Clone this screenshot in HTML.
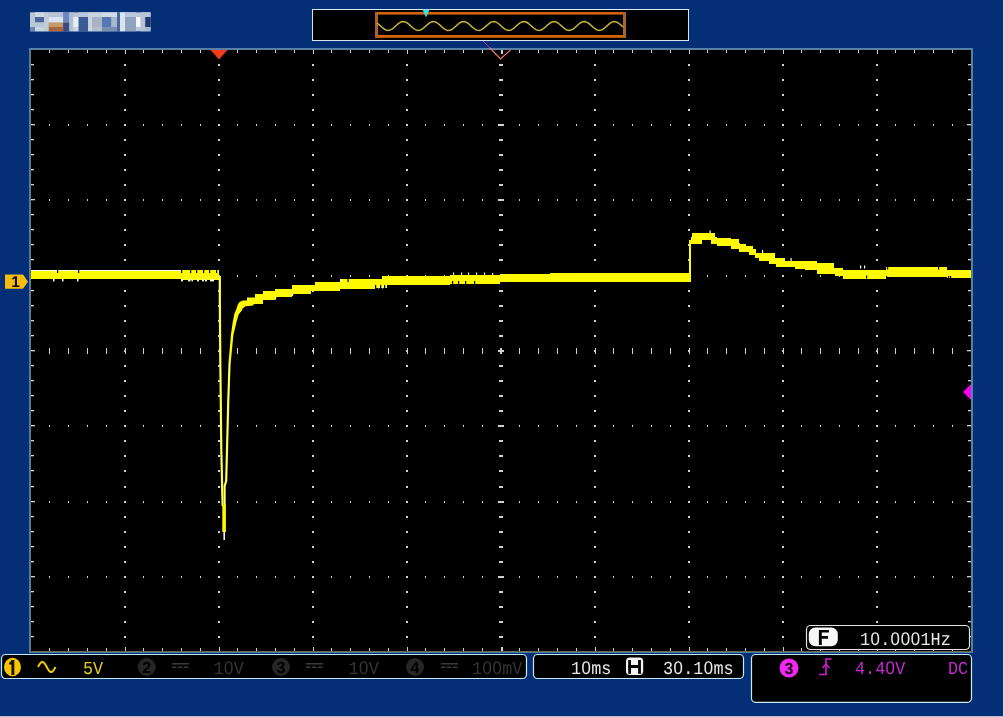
<!DOCTYPE html>
<html><head><meta charset="utf-8"><style>
html,body{margin:0;padding:0;}
svg text{text-rendering:geometricPrecision;}
svg{will-change:transform;}
body{width:1004px;height:717px;position:relative;overflow:hidden;background:#042f76;font-family:"Liberation Mono",monospace;}
.t{position:absolute;white-space:pre;line-height:1;}
.box{position:absolute;box-sizing:border-box;background:#000;}
</style></head><body>
<svg width="1004" height="717" viewBox="0 0 1004 717" style="position:absolute;left:0;top:0"><rect x="0" y="0" width="1004" height="717" fill="#042f76"/><rect x="1003" y="0" width="1" height="717" fill="#d8dce6"/><rect x="0" y="716" width="1004" height="1" fill="#b8c0d4"/><defs><filter id="lb" x="-5%" y="-20%" width="110%" height="140%"><feGaussianBlur stdDeviation="0.55"/></filter></defs><g filter="url(#lb)"><rect x="30" y="12.3" width="120.5" height="19" fill="#b8c6da"/><rect x="30" y="27" width="5" height="4.3" fill="#7088ae"/><rect x="35" y="12.3" width="9" height="4.7" fill="#d0d8e4"/><rect x="35" y="17" width="9" height="5.5" fill="#4c6898"/><rect x="35" y="22.5" width="9" height="4.5" fill="#b8c8d8"/><rect x="35" y="27" width="9" height="4.3" fill="#c8d4e4"/><rect x="44" y="12.3" width="4.7" height="19" fill="#c0ccd8"/><rect x="48.7" y="12.3" width="14.4" height="4.7" fill="#b8c4d4"/><rect x="48.7" y="17" width="14.4" height="5.5" fill="#d8e4ee"/><rect x="48.7" y="22.5" width="14.4" height="4.5" fill="#c49a6a"/><rect x="48.7" y="27" width="14.4" height="4.3" fill="#a8683a"/><rect x="63.1" y="12.3" width="6.3" height="10.2" fill="#6c88c0"/><rect x="63.1" y="22.5" width="6.3" height="8.8" fill="#3e4c80"/><rect x="69.4" y="12.3" width="3.9" height="19" fill="#b0c0d4"/><rect x="73.3" y="17" width="5.3" height="10" fill="#e8eef6"/><rect x="73.3" y="27" width="5.3" height="4.3" fill="#c8d4e4"/><rect x="78.6" y="12.3" width="9.5" height="4.7" fill="#b8c8dc"/><rect x="78.6" y="17" width="9.5" height="14.3" fill="#3c5a94"/><rect x="88.1" y="12.3" width="3.9" height="19" fill="#c8d4e4"/><rect x="92" y="12.3" width="10" height="4.7" fill="#c8d4e0"/><rect x="92" y="17" width="10" height="10" fill="#a8b4c4"/><rect x="92" y="27" width="10" height="4.3" fill="#b0bcd0"/><rect x="102" y="12.3" width="15" height="4.7" fill="#d0dce8"/><rect x="102" y="17" width="9.5" height="10" fill="#5a78b0"/><rect x="111.5" y="17" width="5.5" height="10" fill="#a8b8cc"/><rect x="102" y="27" width="15" height="4.3" fill="#7890b0"/><rect x="117" y="12.3" width="3" height="19" fill="#4868a0"/><rect x="120" y="12.3" width="5" height="19" fill="#d8e4f0"/><rect x="125" y="12.3" width="11" height="19" fill="#90a4c0"/><rect x="125" y="12.3" width="11" height="4.7" fill="#b8c8dc"/><rect x="136" y="17" width="4.6" height="10" fill="#f4f8fc"/><rect x="140.6" y="12.3" width="4.6" height="19" fill="#b8c4d4"/><rect x="145.2" y="12.3" width="5.3" height="4.7" fill="#b8c8dc"/><rect x="145.2" y="17" width="5.3" height="10" fill="#20386c"/><rect x="145.2" y="27" width="5.3" height="4.3" fill="#a8b8cc"/></g><rect x="312" y="9" width="377" height="32" fill="#d4eaf0"/><rect x="313" y="10" width="375" height="30" fill="#000"/><rect x="375" y="12" width="251" height="2.6" fill="#d4640c"/><rect x="375" y="35" width="251" height="2.8" fill="#d4640c"/><rect x="375" y="12" width="3" height="25.8" fill="#b0602a"/><rect x="623" y="12" width="3" height="25.8" fill="#a8642e"/><polyline points="377.0,23.02 378.0,23.75 379.0,24.58 380.0,25.48 381.0,26.39 382.0,27.29 383.0,28.13 384.0,28.88 385.0,29.51 386.0,29.98 387.0,30.28 388.0,30.40 389.0,30.33 390.0,30.07 391.0,29.63 392.0,29.04 393.0,28.31 394.0,27.49 395.0,26.60 396.0,25.69 397.0,24.79 398.0,23.94 399.0,23.18 400.0,22.54 401.0,22.05 402.0,21.74 403.0,21.60 404.0,21.66 405.0,21.91 406.0,22.33 407.0,22.91 408.0,23.62 409.0,24.44 410.0,25.32 411.0,26.24 412.0,27.14 413.0,27.99 414.0,28.76 415.0,29.41 416.0,29.91 417.0,30.24 418.0,30.39 419.0,30.35 420.0,30.12 421.0,29.72 422.0,29.15 423.0,28.44 424.0,27.63 425.0,26.75 426.0,25.84 427.0,24.94 428.0,24.08 429.0,23.30 430.0,22.64 431.0,22.13 432.0,21.78 433.0,21.61 434.0,21.64 435.0,21.85 436.0,22.24 437.0,22.80 438.0,23.49 439.0,24.29 440.0,25.17 441.0,26.08 442.0,26.99 443.0,27.85 444.0,28.64 445.0,29.31 446.0,29.84 447.0,30.20 448.0,30.38 449.0,30.37 450.0,30.17 451.0,29.80 452.0,29.25 453.0,28.57 454.0,27.78 455.0,26.91 456.0,26.00 457.0,25.09 458.0,24.22 459.0,23.42 460.0,22.74 461.0,22.20 462.0,21.82 463.0,21.63 464.0,21.62 465.0,21.80 466.0,22.16 467.0,22.69 468.0,23.37 469.0,24.15 470.0,25.02 471.0,25.92 472.0,26.84 473.0,27.71 474.0,28.51 475.0,29.20 476.0,29.76 477.0,30.15 478.0,30.36 479.0,30.39 480.0,30.22 481.0,29.87 482.0,29.36 483.0,28.70 484.0,27.92 485.0,27.06 486.0,26.15 487.0,25.24 488.0,24.36 489.0,23.55 490.0,22.85 491.0,22.28 492.0,21.88 493.0,21.65 494.0,21.61 495.0,21.76 496.0,22.09 497.0,22.59 498.0,23.24 499.0,24.01 500.0,24.87 501.0,25.77 502.0,26.68 503.0,27.57 504.0,28.38 505.0,29.10 506.0,29.68 507.0,30.10 508.0,30.34 509.0,30.40 510.0,30.26 511.0,29.94 512.0,29.46 513.0,28.82 514.0,28.06 515.0,27.21 516.0,26.31 517.0,25.39 518.0,24.51 519.0,23.68 520.0,22.96 521.0,22.37 522.0,21.93 523.0,21.67 524.0,21.60 525.0,21.72 526.0,22.02 527.0,22.50 528.0,23.12 529.0,23.87 530.0,24.72 531.0,25.61 532.0,26.53 533.0,27.42 534.0,28.25 535.0,28.98 536.0,29.59 537.0,30.04 538.0,30.31 539.0,30.40 540.0,30.30 541.0,30.01 542.0,29.55 543.0,28.94 544.0,28.19 545.0,27.36 546.0,26.46 547.0,25.55 548.0,24.65 549.0,23.82 550.0,23.07 551.0,22.46 552.0,21.99 553.0,21.70 554.0,21.60 555.0,21.69 556.0,21.96 557.0,22.40 558.0,23.01 559.0,23.74 560.0,24.57 561.0,25.46 562.0,26.37 563.0,27.27 564.0,28.11 565.0,28.87 566.0,29.50 567.0,29.97 568.0,30.28 569.0,30.40 570.0,30.33 571.0,30.07 572.0,29.64 573.0,29.05 574.0,28.33 575.0,27.51 576.0,26.62 577.0,25.70 578.0,24.80 579.0,23.95 580.0,23.19 581.0,22.55 582.0,22.06 583.0,21.74 584.0,21.60 585.0,21.66 586.0,21.90 587.0,22.32 588.0,22.89 589.0,23.61 590.0,24.42 591.0,25.30 592.0,26.22 593.0,27.12 594.0,27.98 595.0,28.75 596.0,29.40 597.0,29.90 598.0,30.24 599.0,30.39 600.0,30.35 601.0,30.13 602.0,29.72 603.0,29.16 604.0,28.46 605.0,27.65 606.0,26.77 607.0,25.86 608.0,24.95 609.0,24.09 610.0,23.31 611.0,22.65 612.0,22.13 613.0,21.78 614.0,21.61 615.0,21.64 616.0,21.85 617.0,22.23 618.0,22.79 619.0,23.48 620.0,24.28 621.0,25.15 622.0,26.06 623.0,26.97" fill="none" stroke="#c8b43a" stroke-width="1.5"/><polygon points="422.5,9.5 429.5,9.5 426,17.5" fill="#38e0e0"/><rect x="29" y="48" width="944" height="2" fill="#5a80a8"/><rect x="29" y="48" width="1" height="605" fill="#3a7fd0"/><rect x="30" y="50" width="1" height="601" fill="#7a705a"/><rect x="971" y="48" width="2" height="605" fill="#4a88a8"/><rect x="30" y="651" width="943" height="1" fill="#6a6a50"/><rect x="29" y="652" width="944" height="1" fill="#4a80a0"/><rect x="31" y="50" width="940" height="601" fill="#000"/><g fill="#d0d0d0"><rect x="124" y="64" width="2" height="2"/><rect x="124" y="79" width="2" height="2"/><rect x="124" y="94" width="2" height="2"/><rect x="124" y="109" width="2" height="2"/><rect x="124" y="124" width="2" height="2"/><rect x="124" y="139" width="2" height="2"/><rect x="124" y="154" width="2" height="2"/><rect x="124" y="169" width="2" height="2"/><rect x="124" y="184" width="2" height="2"/><rect x="124" y="199" width="2" height="2"/><rect x="124" y="214" width="2" height="2"/><rect x="124" y="229" width="2" height="2"/><rect x="124" y="244" width="2" height="2"/><rect x="124" y="259" width="2" height="2"/><rect x="124" y="275" width="2" height="2"/><rect x="124" y="290" width="2" height="2"/><rect x="124" y="305" width="2" height="2"/><rect x="124" y="320" width="2" height="2"/><rect x="124" y="335" width="2" height="2"/><rect x="124" y="350" width="2" height="2"/><rect x="124" y="365" width="2" height="2"/><rect x="124" y="380" width="2" height="2"/><rect x="124" y="395" width="2" height="2"/><rect x="124" y="410" width="2" height="2"/><rect x="124" y="425" width="2" height="2"/><rect x="124" y="440" width="2" height="2"/><rect x="124" y="455" width="2" height="2"/><rect x="124" y="470" width="2" height="2"/><rect x="124" y="486" width="2" height="2"/><rect x="124" y="501" width="2" height="2"/><rect x="124" y="516" width="2" height="2"/><rect x="124" y="531" width="2" height="2"/><rect x="124" y="546" width="2" height="2"/><rect x="124" y="561" width="2" height="2"/><rect x="124" y="576" width="2" height="2"/><rect x="124" y="591" width="2" height="2"/><rect x="124" y="606" width="2" height="2"/><rect x="124" y="621" width="2" height="2"/><rect x="124" y="636" width="2" height="2"/><rect x="218" y="64" width="2" height="2"/><rect x="218" y="79" width="2" height="2"/><rect x="218" y="94" width="2" height="2"/><rect x="218" y="109" width="2" height="2"/><rect x="218" y="124" width="2" height="2"/><rect x="218" y="139" width="2" height="2"/><rect x="218" y="154" width="2" height="2"/><rect x="218" y="169" width="2" height="2"/><rect x="218" y="184" width="2" height="2"/><rect x="218" y="199" width="2" height="2"/><rect x="218" y="214" width="2" height="2"/><rect x="218" y="229" width="2" height="2"/><rect x="218" y="244" width="2" height="2"/><rect x="218" y="259" width="2" height="2"/><rect x="218" y="275" width="2" height="2"/><rect x="218" y="290" width="2" height="2"/><rect x="218" y="305" width="2" height="2"/><rect x="218" y="320" width="2" height="2"/><rect x="218" y="335" width="2" height="2"/><rect x="218" y="350" width="2" height="2"/><rect x="218" y="365" width="2" height="2"/><rect x="218" y="380" width="2" height="2"/><rect x="218" y="395" width="2" height="2"/><rect x="218" y="410" width="2" height="2"/><rect x="218" y="425" width="2" height="2"/><rect x="218" y="440" width="2" height="2"/><rect x="218" y="455" width="2" height="2"/><rect x="218" y="470" width="2" height="2"/><rect x="218" y="486" width="2" height="2"/><rect x="218" y="501" width="2" height="2"/><rect x="218" y="516" width="2" height="2"/><rect x="218" y="531" width="2" height="2"/><rect x="218" y="546" width="2" height="2"/><rect x="218" y="561" width="2" height="2"/><rect x="218" y="576" width="2" height="2"/><rect x="218" y="591" width="2" height="2"/><rect x="218" y="606" width="2" height="2"/><rect x="218" y="621" width="2" height="2"/><rect x="218" y="636" width="2" height="2"/><rect x="312" y="64" width="2" height="2"/><rect x="312" y="79" width="2" height="2"/><rect x="312" y="94" width="2" height="2"/><rect x="312" y="109" width="2" height="2"/><rect x="312" y="124" width="2" height="2"/><rect x="312" y="139" width="2" height="2"/><rect x="312" y="154" width="2" height="2"/><rect x="312" y="169" width="2" height="2"/><rect x="312" y="184" width="2" height="2"/><rect x="312" y="199" width="2" height="2"/><rect x="312" y="214" width="2" height="2"/><rect x="312" y="229" width="2" height="2"/><rect x="312" y="244" width="2" height="2"/><rect x="312" y="259" width="2" height="2"/><rect x="312" y="275" width="2" height="2"/><rect x="312" y="290" width="2" height="2"/><rect x="312" y="305" width="2" height="2"/><rect x="312" y="320" width="2" height="2"/><rect x="312" y="335" width="2" height="2"/><rect x="312" y="350" width="2" height="2"/><rect x="312" y="365" width="2" height="2"/><rect x="312" y="380" width="2" height="2"/><rect x="312" y="395" width="2" height="2"/><rect x="312" y="410" width="2" height="2"/><rect x="312" y="425" width="2" height="2"/><rect x="312" y="440" width="2" height="2"/><rect x="312" y="455" width="2" height="2"/><rect x="312" y="470" width="2" height="2"/><rect x="312" y="486" width="2" height="2"/><rect x="312" y="501" width="2" height="2"/><rect x="312" y="516" width="2" height="2"/><rect x="312" y="531" width="2" height="2"/><rect x="312" y="546" width="2" height="2"/><rect x="312" y="561" width="2" height="2"/><rect x="312" y="576" width="2" height="2"/><rect x="312" y="591" width="2" height="2"/><rect x="312" y="606" width="2" height="2"/><rect x="312" y="621" width="2" height="2"/><rect x="312" y="636" width="2" height="2"/><rect x="406" y="64" width="2" height="2"/><rect x="406" y="79" width="2" height="2"/><rect x="406" y="94" width="2" height="2"/><rect x="406" y="109" width="2" height="2"/><rect x="406" y="124" width="2" height="2"/><rect x="406" y="139" width="2" height="2"/><rect x="406" y="154" width="2" height="2"/><rect x="406" y="169" width="2" height="2"/><rect x="406" y="184" width="2" height="2"/><rect x="406" y="199" width="2" height="2"/><rect x="406" y="214" width="2" height="2"/><rect x="406" y="229" width="2" height="2"/><rect x="406" y="244" width="2" height="2"/><rect x="406" y="259" width="2" height="2"/><rect x="406" y="275" width="2" height="2"/><rect x="406" y="290" width="2" height="2"/><rect x="406" y="305" width="2" height="2"/><rect x="406" y="320" width="2" height="2"/><rect x="406" y="335" width="2" height="2"/><rect x="406" y="350" width="2" height="2"/><rect x="406" y="365" width="2" height="2"/><rect x="406" y="380" width="2" height="2"/><rect x="406" y="395" width="2" height="2"/><rect x="406" y="410" width="2" height="2"/><rect x="406" y="425" width="2" height="2"/><rect x="406" y="440" width="2" height="2"/><rect x="406" y="455" width="2" height="2"/><rect x="406" y="470" width="2" height="2"/><rect x="406" y="486" width="2" height="2"/><rect x="406" y="501" width="2" height="2"/><rect x="406" y="516" width="2" height="2"/><rect x="406" y="531" width="2" height="2"/><rect x="406" y="546" width="2" height="2"/><rect x="406" y="561" width="2" height="2"/><rect x="406" y="576" width="2" height="2"/><rect x="406" y="591" width="2" height="2"/><rect x="406" y="606" width="2" height="2"/><rect x="406" y="621" width="2" height="2"/><rect x="406" y="636" width="2" height="2"/><rect x="594" y="64" width="2" height="2"/><rect x="594" y="79" width="2" height="2"/><rect x="594" y="94" width="2" height="2"/><rect x="594" y="109" width="2" height="2"/><rect x="594" y="124" width="2" height="2"/><rect x="594" y="139" width="2" height="2"/><rect x="594" y="154" width="2" height="2"/><rect x="594" y="169" width="2" height="2"/><rect x="594" y="184" width="2" height="2"/><rect x="594" y="199" width="2" height="2"/><rect x="594" y="214" width="2" height="2"/><rect x="594" y="229" width="2" height="2"/><rect x="594" y="244" width="2" height="2"/><rect x="594" y="259" width="2" height="2"/><rect x="594" y="275" width="2" height="2"/><rect x="594" y="290" width="2" height="2"/><rect x="594" y="305" width="2" height="2"/><rect x="594" y="320" width="2" height="2"/><rect x="594" y="335" width="2" height="2"/><rect x="594" y="350" width="2" height="2"/><rect x="594" y="365" width="2" height="2"/><rect x="594" y="380" width="2" height="2"/><rect x="594" y="395" width="2" height="2"/><rect x="594" y="410" width="2" height="2"/><rect x="594" y="425" width="2" height="2"/><rect x="594" y="440" width="2" height="2"/><rect x="594" y="455" width="2" height="2"/><rect x="594" y="470" width="2" height="2"/><rect x="594" y="486" width="2" height="2"/><rect x="594" y="501" width="2" height="2"/><rect x="594" y="516" width="2" height="2"/><rect x="594" y="531" width="2" height="2"/><rect x="594" y="546" width="2" height="2"/><rect x="594" y="561" width="2" height="2"/><rect x="594" y="576" width="2" height="2"/><rect x="594" y="591" width="2" height="2"/><rect x="594" y="606" width="2" height="2"/><rect x="594" y="621" width="2" height="2"/><rect x="594" y="636" width="2" height="2"/><rect x="688" y="64" width="2" height="2"/><rect x="688" y="79" width="2" height="2"/><rect x="688" y="94" width="2" height="2"/><rect x="688" y="109" width="2" height="2"/><rect x="688" y="124" width="2" height="2"/><rect x="688" y="139" width="2" height="2"/><rect x="688" y="154" width="2" height="2"/><rect x="688" y="169" width="2" height="2"/><rect x="688" y="184" width="2" height="2"/><rect x="688" y="199" width="2" height="2"/><rect x="688" y="214" width="2" height="2"/><rect x="688" y="229" width="2" height="2"/><rect x="688" y="244" width="2" height="2"/><rect x="688" y="259" width="2" height="2"/><rect x="688" y="275" width="2" height="2"/><rect x="688" y="290" width="2" height="2"/><rect x="688" y="305" width="2" height="2"/><rect x="688" y="320" width="2" height="2"/><rect x="688" y="335" width="2" height="2"/><rect x="688" y="350" width="2" height="2"/><rect x="688" y="365" width="2" height="2"/><rect x="688" y="380" width="2" height="2"/><rect x="688" y="395" width="2" height="2"/><rect x="688" y="410" width="2" height="2"/><rect x="688" y="425" width="2" height="2"/><rect x="688" y="440" width="2" height="2"/><rect x="688" y="455" width="2" height="2"/><rect x="688" y="470" width="2" height="2"/><rect x="688" y="486" width="2" height="2"/><rect x="688" y="501" width="2" height="2"/><rect x="688" y="516" width="2" height="2"/><rect x="688" y="531" width="2" height="2"/><rect x="688" y="546" width="2" height="2"/><rect x="688" y="561" width="2" height="2"/><rect x="688" y="576" width="2" height="2"/><rect x="688" y="591" width="2" height="2"/><rect x="688" y="606" width="2" height="2"/><rect x="688" y="621" width="2" height="2"/><rect x="688" y="636" width="2" height="2"/><rect x="782" y="64" width="2" height="2"/><rect x="782" y="79" width="2" height="2"/><rect x="782" y="94" width="2" height="2"/><rect x="782" y="109" width="2" height="2"/><rect x="782" y="124" width="2" height="2"/><rect x="782" y="139" width="2" height="2"/><rect x="782" y="154" width="2" height="2"/><rect x="782" y="169" width="2" height="2"/><rect x="782" y="184" width="2" height="2"/><rect x="782" y="199" width="2" height="2"/><rect x="782" y="214" width="2" height="2"/><rect x="782" y="229" width="2" height="2"/><rect x="782" y="244" width="2" height="2"/><rect x="782" y="259" width="2" height="2"/><rect x="782" y="275" width="2" height="2"/><rect x="782" y="290" width="2" height="2"/><rect x="782" y="305" width="2" height="2"/><rect x="782" y="320" width="2" height="2"/><rect x="782" y="335" width="2" height="2"/><rect x="782" y="350" width="2" height="2"/><rect x="782" y="365" width="2" height="2"/><rect x="782" y="380" width="2" height="2"/><rect x="782" y="395" width="2" height="2"/><rect x="782" y="410" width="2" height="2"/><rect x="782" y="425" width="2" height="2"/><rect x="782" y="440" width="2" height="2"/><rect x="782" y="455" width="2" height="2"/><rect x="782" y="470" width="2" height="2"/><rect x="782" y="486" width="2" height="2"/><rect x="782" y="501" width="2" height="2"/><rect x="782" y="516" width="2" height="2"/><rect x="782" y="531" width="2" height="2"/><rect x="782" y="546" width="2" height="2"/><rect x="782" y="561" width="2" height="2"/><rect x="782" y="576" width="2" height="2"/><rect x="782" y="591" width="2" height="2"/><rect x="782" y="606" width="2" height="2"/><rect x="782" y="621" width="2" height="2"/><rect x="782" y="636" width="2" height="2"/><rect x="876" y="64" width="2" height="2"/><rect x="876" y="79" width="2" height="2"/><rect x="876" y="94" width="2" height="2"/><rect x="876" y="109" width="2" height="2"/><rect x="876" y="124" width="2" height="2"/><rect x="876" y="139" width="2" height="2"/><rect x="876" y="154" width="2" height="2"/><rect x="876" y="169" width="2" height="2"/><rect x="876" y="184" width="2" height="2"/><rect x="876" y="199" width="2" height="2"/><rect x="876" y="214" width="2" height="2"/><rect x="876" y="229" width="2" height="2"/><rect x="876" y="244" width="2" height="2"/><rect x="876" y="259" width="2" height="2"/><rect x="876" y="275" width="2" height="2"/><rect x="876" y="290" width="2" height="2"/><rect x="876" y="305" width="2" height="2"/><rect x="876" y="320" width="2" height="2"/><rect x="876" y="335" width="2" height="2"/><rect x="876" y="350" width="2" height="2"/><rect x="876" y="365" width="2" height="2"/><rect x="876" y="380" width="2" height="2"/><rect x="876" y="395" width="2" height="2"/><rect x="876" y="410" width="2" height="2"/><rect x="876" y="425" width="2" height="2"/><rect x="876" y="440" width="2" height="2"/><rect x="876" y="455" width="2" height="2"/><rect x="876" y="470" width="2" height="2"/><rect x="876" y="486" width="2" height="2"/><rect x="876" y="501" width="2" height="2"/><rect x="876" y="516" width="2" height="2"/><rect x="876" y="531" width="2" height="2"/><rect x="876" y="546" width="2" height="2"/><rect x="876" y="561" width="2" height="2"/><rect x="876" y="576" width="2" height="2"/><rect x="876" y="591" width="2" height="2"/><rect x="876" y="606" width="2" height="2"/><rect x="876" y="621" width="2" height="2"/><rect x="876" y="636" width="2" height="2"/><rect x="49" y="124" width="1" height="2"/><rect x="68" y="124" width="1" height="2"/><rect x="87" y="124" width="1" height="2"/><rect x="106" y="124" width="1" height="2"/><rect x="143" y="124" width="1" height="2"/><rect x="162" y="124" width="1" height="2"/><rect x="181" y="124" width="1" height="2"/><rect x="200" y="124" width="1" height="2"/><rect x="237" y="124" width="1" height="2"/><rect x="256" y="124" width="1" height="2"/><rect x="275" y="124" width="1" height="2"/><rect x="294" y="124" width="1" height="2"/><rect x="331" y="124" width="1" height="2"/><rect x="350" y="124" width="1" height="2"/><rect x="369" y="124" width="1" height="2"/><rect x="388" y="124" width="1" height="2"/><rect x="425" y="124" width="1" height="2"/><rect x="444" y="124" width="1" height="2"/><rect x="463" y="124" width="1" height="2"/><rect x="482" y="124" width="1" height="2"/><rect x="519" y="124" width="1" height="2"/><rect x="538" y="124" width="1" height="2"/><rect x="557" y="124" width="1" height="2"/><rect x="576" y="124" width="1" height="2"/><rect x="613" y="124" width="1" height="2"/><rect x="632" y="124" width="1" height="2"/><rect x="651" y="124" width="1" height="2"/><rect x="670" y="124" width="1" height="2"/><rect x="707" y="124" width="1" height="2"/><rect x="726" y="124" width="1" height="2"/><rect x="745" y="124" width="1" height="2"/><rect x="764" y="124" width="1" height="2"/><rect x="801" y="124" width="1" height="2"/><rect x="820" y="124" width="1" height="2"/><rect x="839" y="124" width="1" height="2"/><rect x="858" y="124" width="1" height="2"/><rect x="895" y="124" width="1" height="2"/><rect x="914" y="124" width="1" height="2"/><rect x="933" y="124" width="1" height="2"/><rect x="952" y="124" width="1" height="2"/><rect x="49" y="199" width="1" height="2"/><rect x="68" y="199" width="1" height="2"/><rect x="87" y="199" width="1" height="2"/><rect x="106" y="199" width="1" height="2"/><rect x="143" y="199" width="1" height="2"/><rect x="162" y="199" width="1" height="2"/><rect x="181" y="199" width="1" height="2"/><rect x="200" y="199" width="1" height="2"/><rect x="237" y="199" width="1" height="2"/><rect x="256" y="199" width="1" height="2"/><rect x="275" y="199" width="1" height="2"/><rect x="294" y="199" width="1" height="2"/><rect x="331" y="199" width="1" height="2"/><rect x="350" y="199" width="1" height="2"/><rect x="369" y="199" width="1" height="2"/><rect x="388" y="199" width="1" height="2"/><rect x="425" y="199" width="1" height="2"/><rect x="444" y="199" width="1" height="2"/><rect x="463" y="199" width="1" height="2"/><rect x="482" y="199" width="1" height="2"/><rect x="519" y="199" width="1" height="2"/><rect x="538" y="199" width="1" height="2"/><rect x="557" y="199" width="1" height="2"/><rect x="576" y="199" width="1" height="2"/><rect x="613" y="199" width="1" height="2"/><rect x="632" y="199" width="1" height="2"/><rect x="651" y="199" width="1" height="2"/><rect x="670" y="199" width="1" height="2"/><rect x="707" y="199" width="1" height="2"/><rect x="726" y="199" width="1" height="2"/><rect x="745" y="199" width="1" height="2"/><rect x="764" y="199" width="1" height="2"/><rect x="801" y="199" width="1" height="2"/><rect x="820" y="199" width="1" height="2"/><rect x="839" y="199" width="1" height="2"/><rect x="858" y="199" width="1" height="2"/><rect x="895" y="199" width="1" height="2"/><rect x="914" y="199" width="1" height="2"/><rect x="933" y="199" width="1" height="2"/><rect x="952" y="199" width="1" height="2"/><rect x="49" y="275" width="1" height="2"/><rect x="68" y="275" width="1" height="2"/><rect x="87" y="275" width="1" height="2"/><rect x="106" y="275" width="1" height="2"/><rect x="143" y="275" width="1" height="2"/><rect x="162" y="275" width="1" height="2"/><rect x="181" y="275" width="1" height="2"/><rect x="200" y="275" width="1" height="2"/><rect x="237" y="275" width="1" height="2"/><rect x="256" y="275" width="1" height="2"/><rect x="275" y="275" width="1" height="2"/><rect x="294" y="275" width="1" height="2"/><rect x="331" y="275" width="1" height="2"/><rect x="350" y="275" width="1" height="2"/><rect x="369" y="275" width="1" height="2"/><rect x="388" y="275" width="1" height="2"/><rect x="425" y="275" width="1" height="2"/><rect x="444" y="275" width="1" height="2"/><rect x="463" y="275" width="1" height="2"/><rect x="482" y="275" width="1" height="2"/><rect x="519" y="275" width="1" height="2"/><rect x="538" y="275" width="1" height="2"/><rect x="557" y="275" width="1" height="2"/><rect x="576" y="275" width="1" height="2"/><rect x="613" y="275" width="1" height="2"/><rect x="632" y="275" width="1" height="2"/><rect x="651" y="275" width="1" height="2"/><rect x="670" y="275" width="1" height="2"/><rect x="707" y="275" width="1" height="2"/><rect x="726" y="275" width="1" height="2"/><rect x="745" y="275" width="1" height="2"/><rect x="764" y="275" width="1" height="2"/><rect x="801" y="275" width="1" height="2"/><rect x="820" y="275" width="1" height="2"/><rect x="839" y="275" width="1" height="2"/><rect x="858" y="275" width="1" height="2"/><rect x="895" y="275" width="1" height="2"/><rect x="914" y="275" width="1" height="2"/><rect x="933" y="275" width="1" height="2"/><rect x="952" y="275" width="1" height="2"/><rect x="49" y="425" width="1" height="2"/><rect x="68" y="425" width="1" height="2"/><rect x="87" y="425" width="1" height="2"/><rect x="106" y="425" width="1" height="2"/><rect x="143" y="425" width="1" height="2"/><rect x="162" y="425" width="1" height="2"/><rect x="181" y="425" width="1" height="2"/><rect x="200" y="425" width="1" height="2"/><rect x="237" y="425" width="1" height="2"/><rect x="256" y="425" width="1" height="2"/><rect x="275" y="425" width="1" height="2"/><rect x="294" y="425" width="1" height="2"/><rect x="331" y="425" width="1" height="2"/><rect x="350" y="425" width="1" height="2"/><rect x="369" y="425" width="1" height="2"/><rect x="388" y="425" width="1" height="2"/><rect x="425" y="425" width="1" height="2"/><rect x="444" y="425" width="1" height="2"/><rect x="463" y="425" width="1" height="2"/><rect x="482" y="425" width="1" height="2"/><rect x="519" y="425" width="1" height="2"/><rect x="538" y="425" width="1" height="2"/><rect x="557" y="425" width="1" height="2"/><rect x="576" y="425" width="1" height="2"/><rect x="613" y="425" width="1" height="2"/><rect x="632" y="425" width="1" height="2"/><rect x="651" y="425" width="1" height="2"/><rect x="670" y="425" width="1" height="2"/><rect x="707" y="425" width="1" height="2"/><rect x="726" y="425" width="1" height="2"/><rect x="745" y="425" width="1" height="2"/><rect x="764" y="425" width="1" height="2"/><rect x="801" y="425" width="1" height="2"/><rect x="820" y="425" width="1" height="2"/><rect x="839" y="425" width="1" height="2"/><rect x="858" y="425" width="1" height="2"/><rect x="895" y="425" width="1" height="2"/><rect x="914" y="425" width="1" height="2"/><rect x="933" y="425" width="1" height="2"/><rect x="952" y="425" width="1" height="2"/><rect x="49" y="501" width="1" height="2"/><rect x="68" y="501" width="1" height="2"/><rect x="87" y="501" width="1" height="2"/><rect x="106" y="501" width="1" height="2"/><rect x="143" y="501" width="1" height="2"/><rect x="162" y="501" width="1" height="2"/><rect x="181" y="501" width="1" height="2"/><rect x="200" y="501" width="1" height="2"/><rect x="237" y="501" width="1" height="2"/><rect x="256" y="501" width="1" height="2"/><rect x="275" y="501" width="1" height="2"/><rect x="294" y="501" width="1" height="2"/><rect x="331" y="501" width="1" height="2"/><rect x="350" y="501" width="1" height="2"/><rect x="369" y="501" width="1" height="2"/><rect x="388" y="501" width="1" height="2"/><rect x="425" y="501" width="1" height="2"/><rect x="444" y="501" width="1" height="2"/><rect x="463" y="501" width="1" height="2"/><rect x="482" y="501" width="1" height="2"/><rect x="519" y="501" width="1" height="2"/><rect x="538" y="501" width="1" height="2"/><rect x="557" y="501" width="1" height="2"/><rect x="576" y="501" width="1" height="2"/><rect x="613" y="501" width="1" height="2"/><rect x="632" y="501" width="1" height="2"/><rect x="651" y="501" width="1" height="2"/><rect x="670" y="501" width="1" height="2"/><rect x="707" y="501" width="1" height="2"/><rect x="726" y="501" width="1" height="2"/><rect x="745" y="501" width="1" height="2"/><rect x="764" y="501" width="1" height="2"/><rect x="801" y="501" width="1" height="2"/><rect x="820" y="501" width="1" height="2"/><rect x="839" y="501" width="1" height="2"/><rect x="858" y="501" width="1" height="2"/><rect x="895" y="501" width="1" height="2"/><rect x="914" y="501" width="1" height="2"/><rect x="933" y="501" width="1" height="2"/><rect x="952" y="501" width="1" height="2"/><rect x="49" y="576" width="1" height="2"/><rect x="68" y="576" width="1" height="2"/><rect x="87" y="576" width="1" height="2"/><rect x="106" y="576" width="1" height="2"/><rect x="143" y="576" width="1" height="2"/><rect x="162" y="576" width="1" height="2"/><rect x="181" y="576" width="1" height="2"/><rect x="200" y="576" width="1" height="2"/><rect x="237" y="576" width="1" height="2"/><rect x="256" y="576" width="1" height="2"/><rect x="275" y="576" width="1" height="2"/><rect x="294" y="576" width="1" height="2"/><rect x="331" y="576" width="1" height="2"/><rect x="350" y="576" width="1" height="2"/><rect x="369" y="576" width="1" height="2"/><rect x="388" y="576" width="1" height="2"/><rect x="425" y="576" width="1" height="2"/><rect x="444" y="576" width="1" height="2"/><rect x="463" y="576" width="1" height="2"/><rect x="482" y="576" width="1" height="2"/><rect x="519" y="576" width="1" height="2"/><rect x="538" y="576" width="1" height="2"/><rect x="557" y="576" width="1" height="2"/><rect x="576" y="576" width="1" height="2"/><rect x="613" y="576" width="1" height="2"/><rect x="632" y="576" width="1" height="2"/><rect x="651" y="576" width="1" height="2"/><rect x="670" y="576" width="1" height="2"/><rect x="707" y="576" width="1" height="2"/><rect x="726" y="576" width="1" height="2"/><rect x="745" y="576" width="1" height="2"/><rect x="764" y="576" width="1" height="2"/><rect x="801" y="576" width="1" height="2"/><rect x="820" y="576" width="1" height="2"/><rect x="839" y="576" width="1" height="2"/><rect x="858" y="576" width="1" height="2"/><rect x="895" y="576" width="1" height="2"/><rect x="914" y="576" width="1" height="2"/><rect x="933" y="576" width="1" height="2"/><rect x="952" y="576" width="1" height="2"/><rect x="499" y="64" width="4" height="2"/><rect x="499" y="79" width="4" height="2"/><rect x="499" y="94" width="4" height="2"/><rect x="499" y="109" width="4" height="2"/><rect x="498" y="124" width="6" height="2"/><rect x="499" y="139" width="4" height="2"/><rect x="499" y="154" width="4" height="2"/><rect x="499" y="169" width="4" height="2"/><rect x="499" y="184" width="4" height="2"/><rect x="498" y="199" width="6" height="2"/><rect x="499" y="214" width="4" height="2"/><rect x="499" y="229" width="4" height="2"/><rect x="499" y="244" width="4" height="2"/><rect x="499" y="259" width="4" height="2"/><rect x="498" y="275" width="6" height="2"/><rect x="499" y="290" width="4" height="2"/><rect x="499" y="305" width="4" height="2"/><rect x="499" y="320" width="4" height="2"/><rect x="499" y="335" width="4" height="2"/><rect x="498" y="350" width="6" height="2"/><rect x="499" y="365" width="4" height="2"/><rect x="499" y="380" width="4" height="2"/><rect x="499" y="395" width="4" height="2"/><rect x="499" y="410" width="4" height="2"/><rect x="498" y="425" width="6" height="2"/><rect x="499" y="440" width="4" height="2"/><rect x="499" y="455" width="4" height="2"/><rect x="499" y="470" width="4" height="2"/><rect x="499" y="486" width="4" height="2"/><rect x="498" y="501" width="6" height="2"/><rect x="499" y="516" width="4" height="2"/><rect x="499" y="531" width="4" height="2"/><rect x="499" y="546" width="4" height="2"/><rect x="499" y="561" width="4" height="2"/><rect x="498" y="576" width="6" height="2"/><rect x="499" y="591" width="4" height="2"/><rect x="499" y="606" width="4" height="2"/><rect x="499" y="621" width="4" height="2"/><rect x="499" y="636" width="4" height="2"/><rect x="49" y="348" width="1" height="6"/><rect x="68" y="348" width="1" height="6"/><rect x="87" y="348" width="1" height="6"/><rect x="106" y="348" width="1" height="6"/><rect x="125" y="348" width="1" height="6"/><rect x="143" y="348" width="1" height="6"/><rect x="162" y="348" width="1" height="6"/><rect x="181" y="348" width="1" height="6"/><rect x="200" y="348" width="1" height="6"/><rect x="219" y="348" width="1" height="6"/><rect x="237" y="348" width="1" height="6"/><rect x="256" y="348" width="1" height="6"/><rect x="275" y="348" width="1" height="6"/><rect x="294" y="348" width="1" height="6"/><rect x="313" y="348" width="1" height="6"/><rect x="331" y="348" width="1" height="6"/><rect x="350" y="348" width="1" height="6"/><rect x="369" y="348" width="1" height="6"/><rect x="388" y="348" width="1" height="6"/><rect x="407" y="348" width="1" height="6"/><rect x="425" y="348" width="1" height="6"/><rect x="444" y="348" width="1" height="6"/><rect x="463" y="348" width="1" height="6"/><rect x="482" y="348" width="1" height="6"/><rect x="500" y="348" width="2" height="6"/><rect x="519" y="348" width="1" height="6"/><rect x="538" y="348" width="1" height="6"/><rect x="557" y="348" width="1" height="6"/><rect x="576" y="348" width="1" height="6"/><rect x="595" y="348" width="1" height="6"/><rect x="613" y="348" width="1" height="6"/><rect x="632" y="348" width="1" height="6"/><rect x="651" y="348" width="1" height="6"/><rect x="670" y="348" width="1" height="6"/><rect x="689" y="348" width="1" height="6"/><rect x="707" y="348" width="1" height="6"/><rect x="726" y="348" width="1" height="6"/><rect x="745" y="348" width="1" height="6"/><rect x="764" y="348" width="1" height="6"/><rect x="783" y="348" width="1" height="6"/><rect x="801" y="348" width="1" height="6"/><rect x="820" y="348" width="1" height="6"/><rect x="839" y="348" width="1" height="6"/><rect x="858" y="348" width="1" height="6"/><rect x="877" y="348" width="1" height="6"/><rect x="895" y="348" width="1" height="6"/><rect x="914" y="348" width="1" height="6"/><rect x="933" y="348" width="1" height="6"/><rect x="952" y="348" width="1" height="6"/><rect x="49" y="50" width="1" height="3"/><rect x="49" y="648" width="1" height="3"/><rect x="68" y="50" width="1" height="3"/><rect x="68" y="648" width="1" height="3"/><rect x="87" y="50" width="1" height="3"/><rect x="87" y="648" width="1" height="3"/><rect x="106" y="50" width="1" height="3"/><rect x="106" y="648" width="1" height="3"/><rect x="125" y="50" width="1" height="4"/><rect x="125" y="647" width="1" height="4"/><rect x="143" y="50" width="1" height="3"/><rect x="143" y="648" width="1" height="3"/><rect x="162" y="50" width="1" height="3"/><rect x="162" y="648" width="1" height="3"/><rect x="181" y="50" width="1" height="3"/><rect x="181" y="648" width="1" height="3"/><rect x="200" y="50" width="1" height="3"/><rect x="200" y="648" width="1" height="3"/><rect x="219" y="50" width="1" height="4"/><rect x="219" y="647" width="1" height="4"/><rect x="237" y="50" width="1" height="3"/><rect x="237" y="648" width="1" height="3"/><rect x="256" y="50" width="1" height="3"/><rect x="256" y="648" width="1" height="3"/><rect x="275" y="50" width="1" height="3"/><rect x="275" y="648" width="1" height="3"/><rect x="294" y="50" width="1" height="3"/><rect x="294" y="648" width="1" height="3"/><rect x="313" y="50" width="1" height="4"/><rect x="313" y="647" width="1" height="4"/><rect x="331" y="50" width="1" height="3"/><rect x="331" y="648" width="1" height="3"/><rect x="350" y="50" width="1" height="3"/><rect x="350" y="648" width="1" height="3"/><rect x="369" y="50" width="1" height="3"/><rect x="369" y="648" width="1" height="3"/><rect x="388" y="50" width="1" height="3"/><rect x="388" y="648" width="1" height="3"/><rect x="407" y="50" width="1" height="4"/><rect x="407" y="647" width="1" height="4"/><rect x="425" y="50" width="1" height="3"/><rect x="425" y="648" width="1" height="3"/><rect x="444" y="50" width="1" height="3"/><rect x="444" y="648" width="1" height="3"/><rect x="463" y="50" width="1" height="3"/><rect x="463" y="648" width="1" height="3"/><rect x="482" y="50" width="1" height="3"/><rect x="482" y="648" width="1" height="3"/><rect x="501" y="50" width="2" height="4"/><rect x="501" y="647" width="2" height="4"/><rect x="519" y="50" width="1" height="3"/><rect x="519" y="648" width="1" height="3"/><rect x="538" y="50" width="1" height="3"/><rect x="538" y="648" width="1" height="3"/><rect x="557" y="50" width="1" height="3"/><rect x="557" y="648" width="1" height="3"/><rect x="576" y="50" width="1" height="3"/><rect x="576" y="648" width="1" height="3"/><rect x="595" y="50" width="1" height="4"/><rect x="595" y="647" width="1" height="4"/><rect x="613" y="50" width="1" height="3"/><rect x="613" y="648" width="1" height="3"/><rect x="632" y="50" width="1" height="3"/><rect x="632" y="648" width="1" height="3"/><rect x="651" y="50" width="1" height="3"/><rect x="651" y="648" width="1" height="3"/><rect x="670" y="50" width="1" height="3"/><rect x="670" y="648" width="1" height="3"/><rect x="689" y="50" width="1" height="4"/><rect x="689" y="647" width="1" height="4"/><rect x="707" y="50" width="1" height="3"/><rect x="707" y="648" width="1" height="3"/><rect x="726" y="50" width="1" height="3"/><rect x="726" y="648" width="1" height="3"/><rect x="745" y="50" width="1" height="3"/><rect x="745" y="648" width="1" height="3"/><rect x="764" y="50" width="1" height="3"/><rect x="764" y="648" width="1" height="3"/><rect x="783" y="50" width="1" height="4"/><rect x="783" y="647" width="1" height="4"/><rect x="801" y="50" width="1" height="3"/><rect x="801" y="648" width="1" height="3"/><rect x="820" y="50" width="1" height="3"/><rect x="820" y="648" width="1" height="3"/><rect x="839" y="50" width="1" height="3"/><rect x="839" y="648" width="1" height="3"/><rect x="858" y="50" width="1" height="3"/><rect x="858" y="648" width="1" height="3"/><rect x="877" y="50" width="1" height="4"/><rect x="877" y="647" width="1" height="4"/><rect x="895" y="50" width="1" height="3"/><rect x="895" y="648" width="1" height="3"/><rect x="914" y="50" width="1" height="3"/><rect x="914" y="648" width="1" height="3"/><rect x="933" y="50" width="1" height="3"/><rect x="933" y="648" width="1" height="3"/><rect x="952" y="50" width="1" height="3"/><rect x="952" y="648" width="1" height="3"/><rect x="31" y="64" width="3" height="1.3"/><rect x="968" y="64" width="3" height="1.3"/><rect x="31" y="79" width="3" height="1.3"/><rect x="968" y="79" width="3" height="1.3"/><rect x="31" y="94" width="3" height="1.3"/><rect x="968" y="94" width="3" height="1.3"/><rect x="31" y="109" width="3" height="1.3"/><rect x="968" y="109" width="3" height="1.3"/><rect x="31" y="124" width="4" height="1.3"/><rect x="967" y="124" width="4" height="1.3"/><rect x="31" y="139" width="3" height="1.3"/><rect x="968" y="139" width="3" height="1.3"/><rect x="31" y="154" width="3" height="1.3"/><rect x="968" y="154" width="3" height="1.3"/><rect x="31" y="169" width="3" height="1.3"/><rect x="968" y="169" width="3" height="1.3"/><rect x="31" y="184" width="3" height="1.3"/><rect x="968" y="184" width="3" height="1.3"/><rect x="31" y="199" width="4" height="1.3"/><rect x="967" y="199" width="4" height="1.3"/><rect x="31" y="214" width="3" height="1.3"/><rect x="968" y="214" width="3" height="1.3"/><rect x="31" y="229" width="3" height="1.3"/><rect x="968" y="229" width="3" height="1.3"/><rect x="31" y="244" width="3" height="1.3"/><rect x="968" y="244" width="3" height="1.3"/><rect x="31" y="259" width="3" height="1.3"/><rect x="968" y="259" width="3" height="1.3"/><rect x="31" y="275" width="4" height="1.3"/><rect x="967" y="275" width="4" height="1.3"/><rect x="31" y="290" width="3" height="1.3"/><rect x="968" y="290" width="3" height="1.3"/><rect x="31" y="305" width="3" height="1.3"/><rect x="968" y="305" width="3" height="1.3"/><rect x="31" y="320" width="3" height="1.3"/><rect x="968" y="320" width="3" height="1.3"/><rect x="31" y="335" width="3" height="1.3"/><rect x="968" y="335" width="3" height="1.3"/><rect x="31" y="350" width="4" height="1.3"/><rect x="967" y="350" width="4" height="1.3"/><rect x="31" y="365" width="3" height="1.3"/><rect x="968" y="365" width="3" height="1.3"/><rect x="31" y="380" width="3" height="1.3"/><rect x="968" y="380" width="3" height="1.3"/><rect x="31" y="395" width="3" height="1.3"/><rect x="968" y="395" width="3" height="1.3"/><rect x="31" y="410" width="3" height="1.3"/><rect x="968" y="410" width="3" height="1.3"/><rect x="31" y="425" width="4" height="1.3"/><rect x="967" y="425" width="4" height="1.3"/><rect x="31" y="440" width="3" height="1.3"/><rect x="968" y="440" width="3" height="1.3"/><rect x="31" y="455" width="3" height="1.3"/><rect x="968" y="455" width="3" height="1.3"/><rect x="31" y="470" width="3" height="1.3"/><rect x="968" y="470" width="3" height="1.3"/><rect x="31" y="486" width="3" height="1.3"/><rect x="968" y="486" width="3" height="1.3"/><rect x="31" y="501" width="4" height="1.3"/><rect x="967" y="501" width="4" height="1.3"/><rect x="31" y="516" width="3" height="1.3"/><rect x="968" y="516" width="3" height="1.3"/><rect x="31" y="531" width="3" height="1.3"/><rect x="968" y="531" width="3" height="1.3"/><rect x="31" y="546" width="3" height="1.3"/><rect x="968" y="546" width="3" height="1.3"/><rect x="31" y="561" width="3" height="1.3"/><rect x="968" y="561" width="3" height="1.3"/><rect x="31" y="576" width="4" height="1.3"/><rect x="967" y="576" width="4" height="1.3"/><rect x="31" y="591" width="3" height="1.3"/><rect x="968" y="591" width="3" height="1.3"/><rect x="31" y="606" width="3" height="1.3"/><rect x="968" y="606" width="3" height="1.3"/><rect x="31" y="621" width="3" height="1.3"/><rect x="968" y="621" width="3" height="1.3"/><rect x="31" y="636" width="3" height="1.3"/><rect x="968" y="636" width="3" height="1.3"/></g><polygon points="210.5,50 227.5,50 219,59.5" fill="#f03c1e"/><polyline points="483,41 490,48" fill="none" stroke="#b03898" stroke-width="1"/><polyline points="490,48 500.5,59 510.5,50" fill="none" stroke="#f07a6a" stroke-width="1.2"/><polygon points="963,392 971,384 971,400" fill="#ff00ff"/><polygon points="5,274.5 23,274.5 28,281.7 23,288.8 5,288.8" fill="#f4bc0c"/><text x="15.5" y="287.2" font-family="Liberation Sans" font-weight="bold" font-size="15.5" fill="#100c00" text-anchor="middle">1</text><g fill="#fffa00" shape-rendering="crispEdges"><rect x="31" y="270" width="150" height="9.00"/><rect x="181" y="270" width="38" height="10.00"/><rect x="255" y="293.7" width="8" height="9.80"/><rect x="263" y="291" width="12" height="8.50"/><rect x="275" y="289" width="16.5" height="8.00"/><rect x="291.5" y="285.1" width="19.5" height="8.70"/><rect x="311" y="285.1" width="4" height="5.90"/><rect x="315" y="282.3" width="25" height="8.70"/><rect x="340" y="278.6" width="35" height="10.40"/><rect x="375" y="278.6" width="7" height="9.70"/><rect x="382" y="275.8" width="5" height="12.50"/><rect x="387" y="275.8" width="63" height="8.80"/><rect x="450" y="274.7" width="50" height="9.00"/><rect x="500" y="274" width="50" height="7.80"/><rect x="550" y="273.4" width="140" height="8.40"/><rect x="689" y="240.3" width="2" height="41.50"/><rect x="691" y="237" width="1" height="7.00"/><rect x="692" y="233.2" width="10" height="10.80"/><rect x="702" y="233.2" width="9" height="6.80"/><rect x="711" y="233.2" width="4" height="10.80"/><rect x="715" y="237.1" width="2" height="6.90"/><rect x="717" y="237.5" width="14" height="8.80"/><rect x="731" y="239" width="8" height="10.00"/><rect x="739" y="243.3" width="1" height="8.40"/><rect x="740" y="243.6" width="6" height="8.00"/><rect x="746" y="246.4" width="3" height="5.20"/><rect x="749" y="246.4" width="3.5" height="8.30"/><rect x="752.5" y="248.5" width="2.5" height="6.20"/><rect x="755" y="248.5" width="1" height="9.70"/><rect x="756" y="252.6" width="3" height="5.60"/><rect x="759" y="252.6" width="10" height="8.40"/><rect x="769" y="252.6" width="6" height="10.90"/><rect x="775" y="258.2" width="1" height="5.30"/><rect x="776" y="258.2" width="9" height="8.40"/><rect x="785" y="261" width="10" height="5.60"/><rect x="795" y="261" width="10" height="8.40"/><rect x="805" y="261" width="11.5" height="8.80"/><rect x="816.5" y="263.2" width="17.5" height="11.10"/><rect x="834" y="267.7" width="1" height="6.60"/><rect x="835" y="267.7" width="8" height="8.30"/><rect x="843" y="270" width="43" height="8.60"/><rect x="886" y="267" width="61" height="9.50"/><rect x="947" y="270" width="24" height="8.40"/></g><polygon points="228.6,362 230.9,335 232.7,322 234.4,313.8 236.5,308.7 237.7,305 239,302.5 241,301.2 243,300.4 247,300.4 247,297.4 255.5,297.4 255.5,293.7 255.5,304 253.2,304.5 253.2,305.4 245.7,306.2 242.7,308.3 241.9,310.4 238.6,314.6 236.5,322 233.4,335 230.8,362" fill="#fffa00"/><polyline points="219.8,276 219.8,300 220.3,360 221.3,450 222.6,506" fill="none" stroke="#fffa00" stroke-width="2.2" stroke-linejoin="round"/><polyline points="219.8,276 219.8,300 220.3,360 221.3,450 222.6,506" fill="none" stroke="#fffce0" stroke-width="0.8" stroke-linejoin="round"/><polyline points="224.6,506 224.6,486 226.2,481 227,450 228.3,400 229.6,362" fill="none" stroke="#fffa00" stroke-width="2.2" stroke-linejoin="round"/><polyline points="224.6,506 224.6,486 226.2,481 227,450 228.3,400 229.6,362" fill="none" stroke="#fffce0" stroke-width="0.8" stroke-linejoin="round"/><rect x="222.3" y="505" width="3.6" height="27" fill="#fffa00"/><rect x="181" y="270" width="1.2" height="3" fill="#000"/><rect x="190" y="270" width="1.2" height="3" fill="#000"/><rect x="196" y="270" width="1.2" height="3" fill="#000"/><rect x="203" y="270" width="1.2" height="3" fill="#000"/><rect x="209" y="270" width="1.2" height="3" fill="#000"/><rect x="216" y="270" width="1.2" height="3" fill="#000"/><rect x="181" y="279" width="2" height="2.4" fill="#fff8c0"/><rect x="188" y="279" width="2.5" height="2.4" fill="#fff8c0"/><rect x="191.5" y="279" width="1.5" height="2.4" fill="#fff8c0"/><rect x="197" y="279" width="2" height="2.4" fill="#fff8c0"/><rect x="202" y="279" width="2" height="2.4" fill="#fff8c0"/><rect x="205" y="279" width="2" height="2.4" fill="#fff8c0"/><rect x="210" y="279" width="4" height="2.4" fill="#fff8c0"/><rect x="31" y="270" width="150" height="1" fill="#fffce8"/><rect x="53" y="278.5" width="1.5" height="3" fill="#f8f4d0"/><rect x="62" y="278.5" width="1.5" height="3" fill="#f8f4d0"/><rect x="77" y="278.5" width="1.5" height="3" fill="#f8f4d0"/><rect x="57" y="270" width="1.2" height="3" fill="#000"/><rect x="78" y="270" width="1.2" height="3" fill="#000"/><rect x="275" y="297" width="1.2" height="2.5" fill="#fffce8"/><rect x="292" y="293.5" width="1.2" height="2.5" fill="#fffce8"/><rect x="340" y="279" width="1.2" height="3" fill="#fffce8"/><rect x="347.5" y="278.6" width="1.2" height="3.5" fill="#000"/><rect x="375" y="285" width="1.2" height="4" fill="#000"/><rect x="380" y="285" width="1.2" height="4" fill="#000"/><rect x="384" y="285" width="1.2" height="4" fill="#000"/><rect x="378" y="285.5" width="1.2" height="3" fill="#fffce8"/><rect x="382" y="285.5" width="1.2" height="3" fill="#fffce8"/><rect x="453" y="272.5" width="1.2" height="2.2" fill="#fffce8"/><rect x="461" y="272.5" width="1.2" height="2.2" fill="#fffce8"/><rect x="468" y="272.5" width="1.2" height="2.2" fill="#fffce8"/><rect x="476" y="272.5" width="1.2" height="2.2" fill="#fffce8"/><rect x="484" y="272.5" width="1.2" height="2.2" fill="#fffce8"/><rect x="492" y="273" width="1.2" height="1.8" fill="#fffce8"/><rect x="452" y="281" width="1.2" height="3" fill="#000"/><rect x="458" y="281" width="1.2" height="3" fill="#000"/><rect x="465" y="281" width="1.2" height="3" fill="#000"/><rect x="474" y="281" width="1.2" height="3" fill="#000"/><rect x="709.5" y="230.5" width="1.2" height="3" fill="#fffce8"/><rect x="762" y="250" width="1.2" height="3" fill="#fffce8"/><rect x="790.5" y="258" width="1.2" height="3" fill="#fffce8"/><rect x="860" y="265.5" width="1.2" height="3" fill="#fffce8"/><rect x="864" y="265.5" width="1.2" height="3" fill="#fffce8"/><rect x="866" y="275.5" width="1.2" height="3" fill="#000"/><rect x="887" y="267" width="1.2" height="2.5" fill="#000"/><rect x="938" y="267" width="1.2" height="2.5" fill="#000"/><rect x="886" y="276" width="1.2" height="2.5" fill="#000"/><rect x="948" y="276" width="1.2" height="2.5" fill="#000"/><rect x="950" y="276" width="1.2" height="2.5" fill="#000"/><rect x="223.4" y="531" width="1.6" height="9" fill="#f4f0d0"/><rect x="1.5" y="654.5" width="525.0" height="24.0" rx="4" ry="4" fill="#000" stroke="#c4ecf2" stroke-width="1.2"/><rect x="533.5" y="654.5" width="210.0" height="24.0" rx="4" ry="4" fill="#000" stroke="#c4ecf2" stroke-width="1.2"/><rect x="751.5" y="654.5" width="220.0" height="47.799999999999955" rx="4" ry="4" fill="#000" stroke="#c4ecf2" stroke-width="1.2"/><rect x="806.5" y="625.5" width="163.0" height="24.0" rx="4" ry="4" fill="#000" stroke="#e4e4e4" stroke-width="1.2"/><ellipse cx="12.5" cy="667" rx="8.5" ry="9.2" fill="#f6c400"/><path d="M11.4,660 H14.3 V675 H11.4 V664.6 H9.2 V662.6 Q10.8,662.2 11.4,660 Z" fill="#1a1000"/><polyline points="38.00,667.00 38.50,666.11 39.00,665.24 39.50,664.44 40.00,663.71 40.50,663.09 41.00,662.60 41.50,662.24 42.00,662.05 42.50,662.01 43.00,662.13 43.50,662.40 44.00,662.83 44.50,663.39 45.00,664.06 45.50,664.83 46.00,665.67 46.50,666.55 47.00,667.45 47.50,668.33 48.00,669.17 48.50,669.94 49.00,670.61 49.50,671.17 50.00,671.60 50.50,671.87 51.00,671.99 51.50,671.95 52.00,671.76 52.50,671.40 53.00,670.91 53.50,670.29 54.00,669.56 54.50,668.76 55.00,667.89 55.50,667.00" fill="none" stroke="#f0d000" stroke-width="2"/><text transform="translate(83,674) scale(1,1.09)" font-family="Liberation Mono" font-size="16.8" fill="#e0cc20" ><tspan x="0.00">5</tspan><tspan x="10.08">V</tspan></text><circle cx="146.7" cy="667" r="9" fill="#252525"/><text x="146.7" y="673" font-family="Liberation Sans" font-weight="bold" font-size="16" fill="#000" text-anchor="middle">2</text><rect x="172" y="663" width="17" height="1.5" fill="#3a3a3a"/><rect x="172" y="666.5" width="4.5" height="1.5" fill="#3a3a3a"/><rect x="178" y="666.5" width="4.5" height="1.5" fill="#3a3a3a"/><rect x="184" y="666.5" width="4.5" height="1.5" fill="#3a3a3a"/><text transform="translate(213.5,674) scale(1,1.09)" font-family="Liberation Mono" font-size="16.8" fill="#353535" ><tspan x="0.00">1</tspan><tspan x="10.45" font-family="Liberation Sans">0</tspan><tspan x="20.16">V</tspan></text><circle cx="281" cy="667" r="9" fill="#252525"/><text x="281" y="673" font-family="Liberation Sans" font-weight="bold" font-size="16" fill="#000" text-anchor="middle">3</text><rect x="306" y="663" width="17" height="1.5" fill="#3a3a3a"/><rect x="306" y="666.5" width="4.5" height="1.5" fill="#3a3a3a"/><rect x="312" y="666.5" width="4.5" height="1.5" fill="#3a3a3a"/><rect x="318" y="666.5" width="4.5" height="1.5" fill="#3a3a3a"/><text transform="translate(348.5,674) scale(1,1.09)" font-family="Liberation Mono" font-size="16.8" fill="#353535" ><tspan x="0.00">1</tspan><tspan x="10.45" font-family="Liberation Sans">0</tspan><tspan x="20.16">V</tspan></text><circle cx="415" cy="667" r="9" fill="#252525"/><text x="415" y="673" font-family="Liberation Sans" font-weight="bold" font-size="16" fill="#000" text-anchor="middle">4</text><rect x="441" y="663" width="17" height="1.5" fill="#3a3a3a"/><rect x="441" y="666.5" width="4.5" height="1.5" fill="#3a3a3a"/><rect x="447" y="666.5" width="4.5" height="1.5" fill="#3a3a3a"/><rect x="453" y="666.5" width="4.5" height="1.5" fill="#3a3a3a"/><text transform="translate(472,674) scale(1,1.09)" font-family="Liberation Mono" font-size="16.8" fill="#353535" ><tspan x="0.00">1</tspan><tspan x="10.45" font-family="Liberation Sans">0</tspan><tspan x="20.53" font-family="Liberation Sans">0</tspan><tspan x="30.24">m</tspan><tspan x="40.32">V</tspan></text><text transform="translate(571,674) scale(1,1.09)" font-family="Liberation Mono" font-size="16.8" fill="#e8e8e8" ><tspan x="0.00">1</tspan><tspan x="10.45" font-family="Liberation Sans">0</tspan><tspan x="20.16">m</tspan><tspan x="30.24">s</tspan></text><rect x="626" y="657.6" width="17.2" height="17.4" rx="4" fill="#f4f4f4"/><rect x="628.2" y="660" width="2.8" height="13.8" fill="#000"/><rect x="638.1" y="660" width="2.8" height="13.8" fill="#000"/><rect x="628.2" y="665" width="12" height="3" fill="#000"/><text transform="translate(663,674) scale(1,1.09)" font-family="Liberation Mono" font-size="16.8" fill="#e8e8e8" ><tspan x="0.00">3</tspan><tspan x="10.45" font-family="Liberation Sans">0</tspan><tspan x="20.16">.</tspan><tspan x="30.24">1</tspan><tspan x="40.69" font-family="Liberation Sans">0</tspan><tspan x="50.40">m</tspan><tspan x="60.48">s</tspan></text><circle cx="789" cy="668" r="9.5" fill="#f028f0"/><text x="789" y="674" font-family="Liberation Sans" font-weight="bold" font-size="16" fill="#1a001a" text-anchor="middle">3</text><polyline points="819,674.5 826,674.5 826,659 831.5,659" fill="none" stroke="#d020d0" stroke-width="1.6"/><polyline points="822.5,668 826,664 829.5,668" fill="none" stroke="#d020d0" stroke-width="1.4"/><text transform="translate(855,674) scale(1,1.09)" font-family="Liberation Mono" font-size="16.8" fill="#c42ad0" ><tspan x="0.00">4</tspan><tspan x="10.08">.</tspan><tspan x="20.16">4</tspan><tspan x="30.61" font-family="Liberation Sans">0</tspan><tspan x="40.32">V</tspan></text><text transform="translate(948,674) scale(1,1.09)" font-family="Liberation Mono" font-size="16.8" fill="#c42ad0" ><tspan x="0.00">D</tspan><tspan x="10.08">C</tspan></text><rect x="808.8" y="627.6" width="29" height="18.6" rx="6.5" fill="#f8f8f8"/><path d="M818.9,630 H828.9 V632.6 H821.8 V636 H828 V638.7 H821.8 V645 H818.9 Z" fill="#000"/><text transform="translate(860,644.5) scale(1,1.09)" font-family="Liberation Mono" font-size="16.8" fill="#e8e8e8" ><tspan x="0.00">1</tspan><tspan x="10.45" font-family="Liberation Sans">0</tspan><tspan x="20.16">.</tspan><tspan x="30.61" font-family="Liberation Sans">0</tspan><tspan x="40.69" font-family="Liberation Sans">0</tspan><tspan x="50.77" font-family="Liberation Sans">0</tspan><tspan x="60.48">1</tspan><tspan x="70.56">H</tspan><tspan x="80.64">z</tspan></text></svg>
</body></html>
